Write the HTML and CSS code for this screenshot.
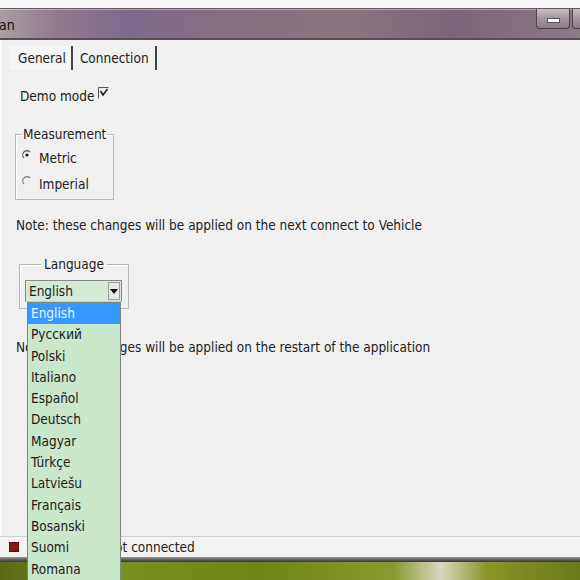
FILE: index.html
```html
<!DOCTYPE html>
<html>
<head>
<meta charset="utf-8">
<link rel="stylesheet" href="styles.css">
</head>
<body>
<div class="screen">
  <div class="topstrip"></div>
  <div class="titlebar">
    <span class="title">an</span>
    <div class="caption-btns">
      <div class="cbtn min"><span class="dash"></span></div>
      <div class="cbtn max"></div>
    </div>
  </div>
  <div class="content">
    <div class="tabs">
      <div class="tab first active">General</div>
      <div class="tab second">Connection</div>
    </div>
    <div class="demo">
      <span>Demo mode</span>
      <svg class="check" width="11" height="12" viewBox="0 0 11 12">
        <path d="M0.5 11.5 V0.5 H10.5" fill="none" stroke="#555" stroke-width="1"/>
        <path d="M2.5 4 L5 8 L9.5 2" fill="none" stroke="#222" stroke-width="1.6"/>
      </svg>
    </div>
    <fieldset class="measure">
      <legend>Measurement</legend>
      <div class="radio">
        <svg width="10" height="10" viewBox="0 0 10 10">
          <path d="M8 2 A4.2 4.2 0 0 0 2 8" fill="none" stroke="#666" stroke-width="1.3"/>
          <circle cx="5" cy="5" r="1.6" fill="#111"/>
        </svg>
        <span>Metric</span>
      </div>
      <div class="radio">
        <svg width="10" height="10" viewBox="0 0 10 10">
          <path d="M8 2 A4.2 4.2 0 0 0 2 8" fill="none" stroke="#888" stroke-width="1.3"/>
        </svg>
        <span>Imperial</span>
      </div>
    </fieldset>
    <p class="note">Note: these changes will be applied on the next connect to Vehicle</p>
    <fieldset class="lang">
      <legend>Language</legend>
      <div class="combo">
        <span>English</span>
        <div class="combo-btn">
          <svg width="12" height="18" viewBox="0 0 12 18">
            <rect x="0.5" y="0.5" width="11" height="17" fill="#e8e8e8" stroke="#555" stroke-dasharray="1 1"/>
            <path d="M2 7 H10 L6 12 Z" fill="#111"/>
          </svg>
        </div>
      </div>
    </fieldset>
    <p class="note note2">Note: these changes will be applied on the restart of the application</p>
  </div>
  <div class="statusbar">
    <span class="led"></span>
    <span class="status">Not connected</span>
  </div>
  <div class="frame"></div>
  <div class="desktop"></div>

  <ul class="dropdown">
    <li class="sel">English</li>
    <li>Русский</li>
    <li>Polski</li>
    <li>Italiano</li>
    <li>Español</li>
    <li>Deutsch</li>
    <li>Magyar</li>
    <li>Türkçe</li>
    <li>Latviešu</li>
    <li>Français</li>
    <li>Bosanski</li>
    <li>Suomi</li>
    <li>Romana</li>
  </ul>
</div>
</body>
</html>
```

FILE: styles.css
```css
html, body {
  margin: 0;
  padding: 0;
  width: 580px;
  height: 580px;
  overflow: hidden;
}
body {
  font-family: "DejaVu Sans Condensed", "DejaVu Sans", sans-serif;
  font-size: 13px;
  color: #1c1c1c;
}
.screen {
  position: relative;
  width: 580px;
  height: 580px;
  display: flex;
  flex-direction: column;
  background: #f0f0f0;
}
.topstrip {
  height: 8px;
  background: #f6f6f6;
  flex: none;
}
.titlebar {
  height: 29px;
  flex: none;
  display: flex;
  align-items: center;
  justify-content: space-between;
  background: linear-gradient(90deg, #a89ea4 0%, #8f7a8a 10%, #7e6a8e 22%, #86707f 40%, #8c7480 60%, #7d6478 78%, #8a7a84 100%);
  border-top: 1px solid #6a5a64;
  border-bottom: 2px solid #5a4e56;
  box-shadow: inset 0 1px 0 rgba(255,255,255,0.35);
}
.title {
  color: #111;
  font-size: 14px;
  margin-left: -1px;
  margin-top: 2px;
}
.caption-btns {
  display: flex;
  align-self: flex-start;
  gap: 2px;
  margin-right: -12px;
}
.cbtn {
  height: 19px;
  border: 1px solid #4e444a;
  border-top: none;
  border-radius: 0 0 4px 4px;
  background: linear-gradient(180deg, #c8bcc4 0%, #a8969f 50%, #8c7c85 100%);
  display: flex;
  align-items: center;
  justify-content: center;
}
.cbtn.min { width: 32px; }
.cbtn.max { width: 18px; border-radius: 0 0 0 4px; }
.dash {
  width: 11px;
  height: 3px;
  background: #fff;
  border: 1px solid #555;
  margin-top: 3px;
}
.content {
  flex: 1;
  position: relative;
  padding: 0 0 0 14px;
  border-left: 2px solid #fafafa;
}
.tabs {
  display: flex;
  margin: 6px 0 0 -6px;
  height: 24px;
}
.tab {
  font-size: 13.5px;
  line-height: 20px;
  padding-top: 2px;
  border-right: 2px solid #444;
}
.tab.first {
  padding-left: 8px;
  padding-right: 5px;
}
.tab.second {
  padding-left: 7px;
  padding-right: 6px;
}
.tab.active {
  background: #f6f6f6;
}
.demo {
  margin: 18px 0 0 4px;
  display: flex;
  align-items: flex-start;
  gap: 4px;
  font-size: 13.5px;
  line-height: 16px;
}
.check { margin-top: -1px; }
fieldset {
  margin: 0;
  padding: 0;
  border: 1px solid #b8b8b8;
  box-shadow: 1px 1px 0 #fff inset;
}
legend {
  font-size: 13.5px;
  padding: 0 1px;
}
.measure {
  height: 74px;
  margin: 22px 0 0 -1px;
  padding: 3px 0 0 6px;
  box-sizing: border-box;
  width: 99px;
}
.measure legend { margin-left: 0; }
.radio {
  display: flex;
  align-items: center;
  gap: 7px;
  height: 26px;
  font-size: 13.5px;
}
.radio svg { margin-top: -6px; }
.note {
  margin: 17px 0 0 0;
  font-size: 13.5px;
  line-height: 16px;
}
.lang {
  height: 53px;
  margin: 23px 0 0 3px;
  padding: 0 0 0 5px;
  box-sizing: border-box;
  width: 110px;
}
.lang legend {
  margin-left: 16px;
  padding: 0 3px;
}
.combo {
  width: 97px;
  height: 22px;
  margin-top: 8px;
  background: #d4ead4;
  border: 1px solid #888;
  border-bottom-color: #ccc;
  box-sizing: border-box;
  display: flex;
  align-items: center;
  justify-content: space-between;
  padding-left: 3px;
}
.combo span { font-size: 13.5px; }
.combo-btn {
  display: flex;
  margin-right: 1px;
}
.note2 {
  margin-top: 30px;
}
.statusbar {
  flex: none;
  height: 20px;
  border-top: 1px solid #cfcfcf;
  background: #f2f2f2;
  display: flex;
  align-items: center;
  padding-left: 9px;
}
.led {
  width: 10px;
  height: 10px;
  background: #8e1418;
  border: 1px solid #5a0a0c;
  box-sizing: border-box;
}
.status {
  margin-left: 87px;
  font-size: 13.5px;
}
.frame {
  flex: none;
  height: 5px;
  background: linear-gradient(180deg, #9a9a9a, #585858 60%, #3a3a2a);
}
.desktop {
  flex: none;
  height: 18px;
  background: linear-gradient(90deg, #5a6a14 0%, #7a9020 20%, #6e8418 45%, #8a9a30 68%, #d8d8c0 76%, #8a9428 84%, #6a7a1a 100%);
}
.dropdown {
  position: absolute;
  left: 27px;
  top: 302px;
  width: 94px;
  height: 290px;
  margin: 0;
  padding: 0;
  list-style: none;
  background: #c9e7cb;
  border: 1px solid #7a8a7a;
  box-sizing: border-box;
}
.dropdown li {
  height: 21.3px;
  line-height: 21.3px;
  padding-left: 3px;
  font-size: 13.5px;
  color: #1a1a1a;
}
.dropdown li.sel {
  background: #3399ff;
  color: #e8f4ff;
}
```
